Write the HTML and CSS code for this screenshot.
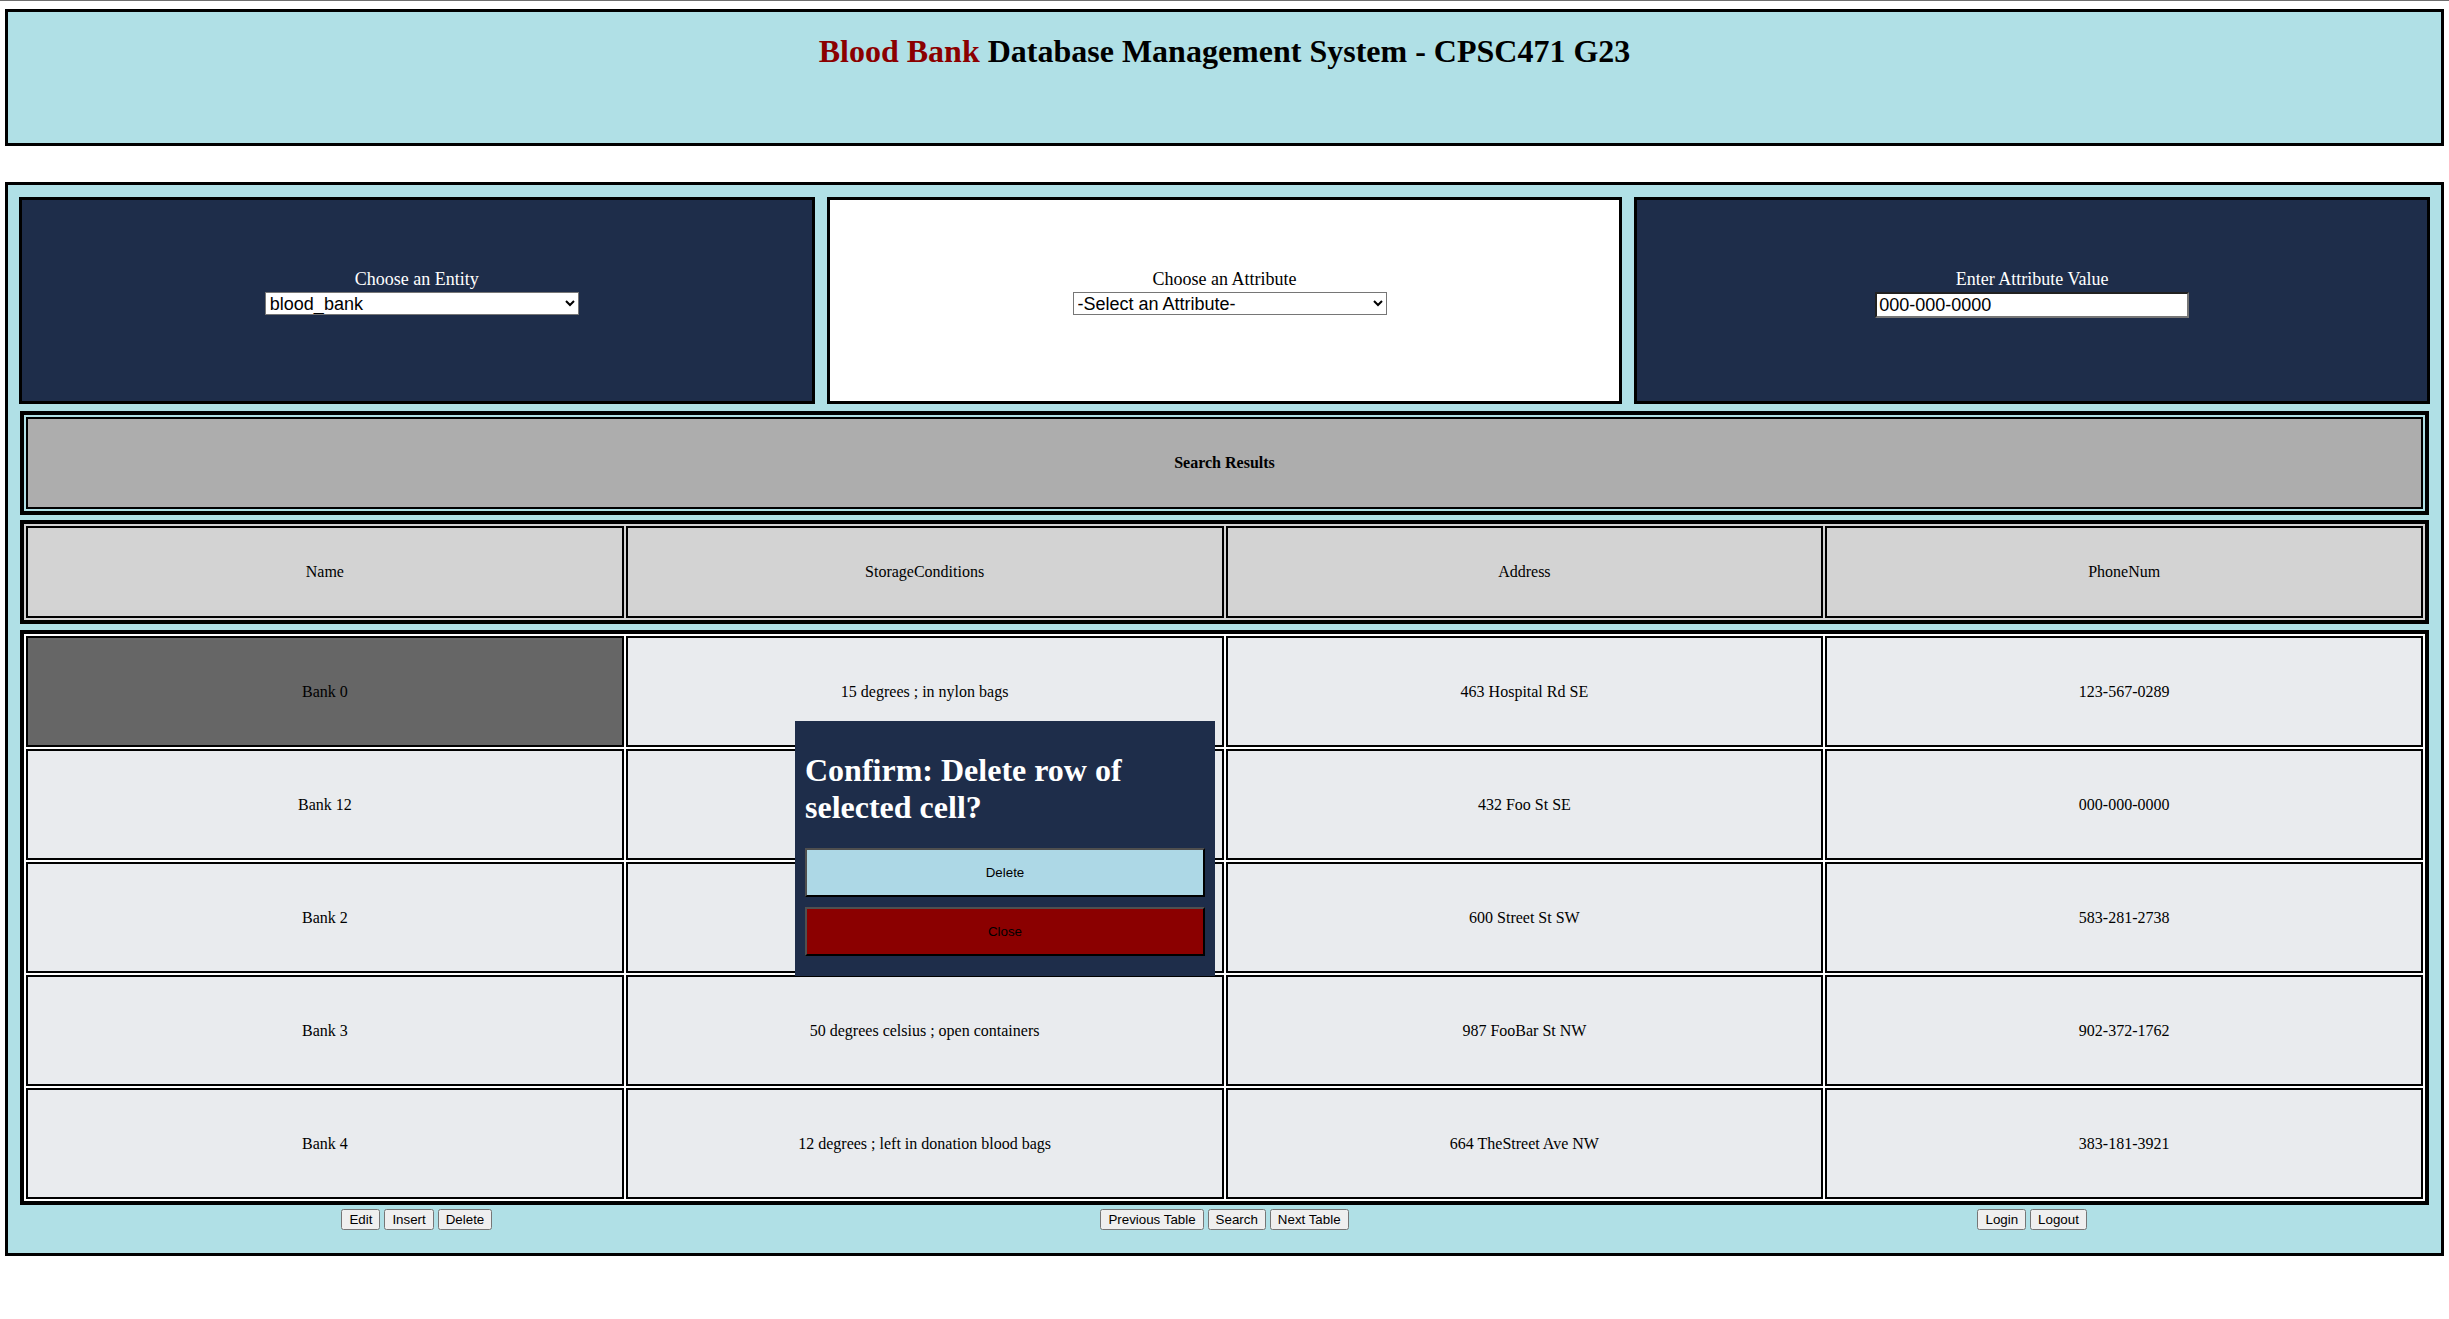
FILE: index.html
```html
<!DOCTYPE html>
<html lang="en">
<head>
<meta charset="utf-8">
<title>Blood Bank Database Management System</title>
<link rel="stylesheet" href="styles.css">
</head>
<body>
<header class="banner">
  <h1 class="banner-title"><span class="accent">Blood Bank</span> Database Management System - CPSC471 G23</h1>
</header>

<main class="workspace">
  <div class="controls">
    <div class="panel panel-dark">
      <label class="panel-label" for="entity">Choose an Entity</label>
      <select id="entity" class="field field-select"><option>blood_bank</option></select>
    </div>
    <div class="panel panel-light">
      <label class="panel-label" for="attribute">Choose an Attribute</label>
      <select id="attribute" class="field field-select"><option>-Select an Attribute-</option></select>
    </div>
    <div class="panel panel-dark">
      <label class="panel-label" for="value">Enter Attribute Value</label>
      <input id="value" class="field field-text" type="text" value="000-000-0000">
    </div>
  </div>

  <table class="grid grid-title">
    <tr><th>Search Results</th></tr>
  </table>

  <table class="grid grid-head">
    <tr><th>Name</th><th>StorageConditions</th><th>Address</th><th>PhoneNum</th></tr>
  </table>

  <table class="grid grid-body">
    <tr><td class="selected">Bank 0</td><td>15 degrees ; in nylon bags</td><td>463 Hospital Rd SE</td><td>123-567-0289</td></tr>
    <tr><td>Bank 12</td><td></td><td>432 Foo St SE</td><td>000-000-0000</td></tr>
    <tr><td>Bank 2</td><td></td><td>600 Street St SW</td><td>583-281-2738</td></tr>
    <tr><td>Bank 3</td><td>50 degrees celsius ; open containers</td><td>987 FooBar St NW</td><td>902-372-1762</td></tr>
    <tr><td>Bank 4</td><td>12 degrees ; left in donation blood bags</td><td>664 TheStreet Ave NW</td><td>383-181-3921</td></tr>
  </table>

  <div class="actions">
    <div class="action-group">
      <button class="btn">Edit</button>
      <button class="btn">Insert</button>
      <button class="btn">Delete</button>
    </div>
    <div class="action-group">
      <button class="btn">Previous Table</button>
      <button class="btn">Search</button>
      <button class="btn">Next Table</button>
    </div>
    <div class="action-group">
      <button class="btn">Login</button>
      <button class="btn">Logout</button>
    </div>
  </div>
</main>

<div class="modal">
  <h1 class="modal-title">Confirm: Delete row of selected cell?</h1>
  <button class="modal-btn modal-confirm">Delete</button>
  <button class="modal-btn modal-close">Close</button>
</div>
</body>
</html>
```

FILE: styles.css
```css
html {
  border-top: 1px solid #6e6e6e;
}

body {
  margin: 8px 5px 0;
  font-family: "Liberation Serif", "Times New Roman", serif;
  font-size: 16px;
  color: #000;
  background: #fff;
}

.banner {
  box-sizing: border-box;
  height: 137px;
  background: #b0e0e6;
  border: 3px solid #000;
  text-align: center;
}

.banner-title {
  margin: 21.44px 0 0;
  font-size: 32px;
  font-weight: bold;
}

.accent {
  color: #8b0000;
}

.workspace {
  display: block;
  margin-top: 36px;
  background: #b0e0e6;
  border: 3px solid #000;
  padding: 12px 11px 23px;
}

.controls {
  display: flex;
  gap: 12px;
}

.panel {
  flex: 1;
  box-sizing: border-box;
  height: 207px;
  border: 3px solid #000;
  display: flex;
  flex-direction: column;
  align-items: center;
  padding-top: 69px;
}

.panel-dark {
  background: #1e2d4a;
  color: #fff;
}

.panel-light {
  background: #fff;
  color: #000;
}

.panel-label {
  font-size: 18px;
  line-height: 21px;
}

.field {
  margin-top: 2px;
  width: 314px;
  box-sizing: border-box;
  font-family: "Liberation Sans", Arial, sans-serif;
  font-size: 18px;
  color: #000;
  background: #fff;
}

.field-select {
  height: 23px;
  margin-left: 10px;
}

.field-text {
  height: 26px;
  padding: 1px 2px;
}

.grid {
  width: calc(100% - 2px);
  margin-left: 1px;
  table-layout: fixed;
  border-collapse: separate;
  border-spacing: 2px;
  border: 4px solid #000;
}

.grid th,
.grid td {
  box-sizing: border-box;
  border: 2px solid #000;
  padding: 0;
  text-align: center;
  vertical-align: middle;
  font-size: 16px;
  font-weight: normal;
}

.grid-title {
  margin-top: 7px;
}

.grid-title th {
  height: 92px;
  background: #adadad;
  font-weight: bold;
}

.grid-head {
  margin-top: 5px;
  background: #d3d3d3;
}

.grid-head th {
  height: 92px;
  background: #d3d3d3;
}

.grid-body {
  margin-top: 6px;
  background: #fff;
}

.grid-body td {
  height: 111px;
  background: #e9ebee;
}

.grid-body td.selected {
  background: #666666;
}

.actions {
  display: flex;
  gap: 12px;
  margin-top: 4px;
}

.action-group {
  flex: 1;
  display: flex;
  justify-content: center;
  gap: 4px;
}

.btn {
  font-family: "Liberation Sans", Arial, sans-serif;
  font-size: 13.33px;
  color: #000;
}

.modal {
  position: absolute;
  left: 795px;
  top: 721px;
  width: 420px;
  box-sizing: border-box;
  padding: 10px;
  background: #1e2d4a;
}

.modal-title {
  margin: 21.44px 0;
  font-size: 32px;
  font-weight: bold;
  color: #fff;
}

.modal-btn {
  display: block;
  width: 100%;
  height: 49px;
  margin-bottom: 10px;
  border: 2px solid;
  border-color: #4f4f4f #000 #000 #4f4f4f;
  font-family: "Liberation Sans", Arial, sans-serif;
  font-size: 13.33px;
  color: #000;
}

.modal-confirm {
  background: #add8e6;
}

.modal-close {
  background: #8b0000;
}
```
